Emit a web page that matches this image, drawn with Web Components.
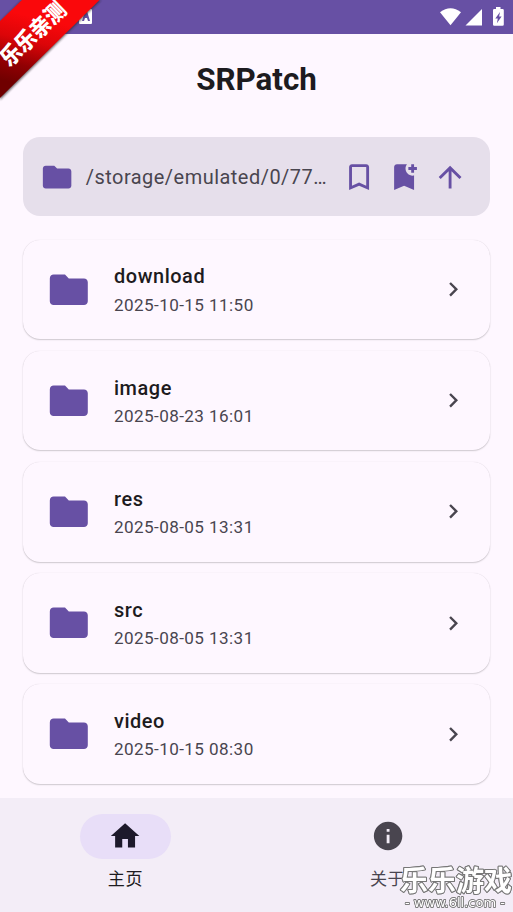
<!DOCTYPE html>
<html lang="zh-CN">
<head>
<meta charset="utf-8">
<title>SRPatch</title>
<style>
html, body { margin: 0; height: 100%; }
body { font-family: Roboto, "Noto Sans CJK SC", sans-serif; background: #fef7ff; overflow: hidden; }
</style>
</head>
<body>
<patch-app></patch-app>
<script>
const ICONS = {
  folder: 'M10 4H4c-1.1 0-1.99.9-1.99 2L2 18c0 1.1.9 2 2 2h16c1.1 0 2-.9 2-2V8c0-1.1-.9-2-2-2h-8l-2-2z',
  bookmark: 'M17 3H7c-1.1 0-2 .9-2 2v16l7-3 7 3V5c0-1.1-.9-2-2-2zm0 15-5-2.18L7 18V5h10v13z',
  bookmarkAdd: 'M21 7h-2v2h-2V7h-2V5h2V3h2v2h2v2zm-2 14-7-3-7 3V5c0-1.1.9-2 2-2h7c-.63.84-1 1.87-1 3 0 2.76 2.24 5 5 5 .34 0 .68-.03 1-.1V21z',
  up: 'M4 12l1.41 1.41L11 7.83V20h2V7.83l5.58 5.59L20 12l-8-8-8 8z',
  chevron: 'M10 6 8.59 7.41 13.17 12l-4.58 4.59L10 18l6-6z',
  home: 'M10 20v-6h4v6h5v-8h3L12 3 2 12h3v8z',
  info: 'M12 2C6.48 2 2 6.48 2 12s4.48 10 10 10 10-4.48 10-10S17.52 2 12 2zm1 15h-2v-6h2v6zm0-8h-2V7h2v2z'
};
function define(name, render) {
  customElements.define(name, class extends HTMLElement {
    constructor() { super(); this.attachShadow({ mode: 'open' }); }
    connectedCallback() { this.shadowRoot.innerHTML = render(this); }
  });
}

define('md-icon', el => `
<style>
:host { display: block; flex: none; width: var(--size, 34.2px); height: var(--size, 34.2px); }
svg { display: block; width: 100%; height: 100%; fill: currentColor; }
</style>
<svg viewBox="0 0 24 24"><path d="${ICONS[el.getAttribute('name')]}"/></svg>`);

define('status-bar', () => `
<style>
:host { display: flex; height: 34px; background: #6750a4; box-sizing: border-box; justify-content: space-between; padding: 0 8px 0 78px; }
svg { display: block; }
</style>
<svg width="16" height="34" viewBox="0 0 16 34"><rect x="1" y="9" width="13" height="15" rx="1" fill="#fff"/><path d="M4 21 7 11h2l3 10h-2l-1-3H7l-1 3z" fill="#6750a4"/></svg>
<svg width="66" height="34" viewBox="439 0 66 34" fill="#fff">
<path d="M440 12.2Q450.500 4.500 461 12.200L450.500 25.200z"/>
<path d="M482 9v16.500h-16.500z"/>
<path d="M496 9V7h4.500v2H502.500q1.300 0 1.300 1.300V24.500q0 1.300-1.300 1.300H494.300q-1.300 0-1.300-1.300V10.300Q493 9 494.300 9z"/>
<path d="M500 12l-4.700 6.500h2.500l-.9 4.800 4.700-6.800h-2.500z" fill="#6750a4"/>
</svg>`);

define('path-bar', () => `
<style>
:host { display: flex; align-items: center; height: 79.500px; box-sizing: border-box; padding: 0 23.200px 0 17px; background: #e6dfeb; border-radius: 17.100px; color: #6750a4; }
.path { flex: none; width: 243px; margin-left: 11.700px; font-size: 19.950px; line-height: 28px; letter-spacing: .5px; color: #49454f; white-space: nowrap; }
.actions { display: flex; margin-left: auto; gap: 11.400px; }
</style>
<md-icon name="folder"></md-icon>
<div class="path"><slot></slot></div>
<div class="actions"><md-icon name="bookmark"></md-icon><md-icon name="bookmarkAdd"></md-icon><md-icon name="up"></md-icon></div>`);

define('file-card', el => `
<style>
:host { display: flex; align-items: center; height: 99.750px; box-sizing: border-box; padding: 0 22.800px 0 22.800px; border-radius: 17.100px; background: #fef7ff; box-shadow: 0 1px 1.500px rgba(0,0,0,.18), 0 0 1px rgba(0,0,0,.14); }
.folder { --size: 45.600px; color: #6750a4; }
.text { flex: 1; margin-left: 22.800px; }
.name { font-size: 19.950px; font-weight: 500; line-height: 28.500px; letter-spacing: .55px; color: #1d1b20; }
.date { font-size: 17.100px; line-height: 22.800px; margin-top: 2.850px; letter-spacing: .41px; color: #49454f; }
.go { --size: 28.500px; color: #49454f; }
</style>
<md-icon class="folder" name="folder"></md-icon>
<div class="text"><div class="name"><slot></slot></div><div class="date">${el.getAttribute('date')}</div></div>
<md-icon class="go" name="chevron"></md-icon>`);

define('nav-item', el => `
<style>
:host { display: flex; flex: 1; flex-direction: column; align-items: center; color: #49454f; }
.pill { display: flex; align-items: center; justify-content: center; width: 91.200px; height: 45.600px; border-radius: 22.800px; }
:host([active]) .pill { background: #e8def8; color: #1d192b; }
:host([active]) { color: #1d1b20; }
.label { margin-top: 8.600px; font-size: 17.100px; line-height: 22.800px; letter-spacing: .5px; }
</style>
<div class="pill"><md-icon name="${el.getAttribute('icon')}"></md-icon></div>
<div class="label"><slot></slot></div>`);

define('nav-bar', () => `
<style>:host { display: flex; gap: 11.400px; height: 114px; box-sizing: border-box; padding-top: 15.700px; background: #f3edf7; }</style>
<slot></slot>`);

define('corner-ribbon', () => `
<style>
:host { position: absolute; left: 0; top: 0; width: 110px; height: 110px; }
svg { display: block; }
text { font: 900 20px "Noto Sans CJK SC", sans-serif; fill: #fff; }
</style>
<svg width="110" height="110" viewBox="0 0 110 110">
<defs><linearGradient id="r" gradientUnits="userSpaceOnUse" x1="38" y1="18" x2="22" y2="85"><stop offset="0" stop-color="#fa080b"/><stop offset=".35" stop-color="#dc0508"/><stop offset=".72" stop-color="#910003"/><stop offset="1" stop-color="#700000"/></linearGradient>
<filter id="s"><feGaussianBlur stdDeviation="1.300"/></filter></defs>
<path d="M22 0H101L0 100V22z" fill="#222" opacity=".65" filter="url(#s)"/>
<path d="M22 0H99.500L0 98V21z" fill="url(#r)"/>
<text transform="translate(33.200 34) rotate(-44) scale(1 1.120)" x="0" y="7" text-anchor="middle" textLength="81" lengthAdjust="spacingAndGlyphs">乐乐亲测</text>
</svg>`);

define('site-mark', () => `
<style>
:host { position: absolute; left: 393px; top: 856px; width: 120px; height: 56px; }
svg { display: block; filter: drop-shadow(0 0 .6px #777); }
text { fill: #fff; stroke: #777; paint-order: stroke; stroke-linejoin: round; }
.name { font: 700 28px "Noto Sans CJK SC", sans-serif; stroke-width: 2px; }
.url { font: 13px "DejaVu Sans", sans-serif; stroke-width: 1.500px; }
</style>
<svg width="120" height="56" viewBox="0 0 120 56">
<text class="name" x="7" y="35" textLength="112" lengthAdjust="spacingAndGlyphs">乐乐游戏</text>
<text class="url" x="12" y="51" textLength="100" lengthAdjust="spacingAndGlyphs">- www.6ll.com -</text>
</svg>`);

define('patch-app', () => `
<style>
:host { position: relative; display: flex; flex-direction: column; width: 513px; height: 912px; overflow: hidden; background: #fef7ff; }
h1 { margin: 0; height: 91.200px; line-height: 91.200px; text-align: center; font-size: 31.350px; font-weight: 700; color: #1d1b20; }
main { flex: 1; display: flex; flex-direction: column; padding: 11.800px 22.800px 0; }
.files { display: flex; flex-direction: column; gap: 11.400px; margin-top: 23.100px; }
</style>
<status-bar></status-bar>
<h1>SRPatch</h1>
<main>
<path-bar>/storage/emulated/0/77…</path-bar>
<div class="files">
<file-card date="2025-10-15 11:50">download</file-card>
<file-card date="2025-08-23 16:01">image</file-card>
<file-card date="2025-08-05 13:31">res</file-card>
<file-card date="2025-08-05 13:31">src</file-card>
<file-card date="2025-10-15 08:30">video</file-card>
</div>
</main>
<nav-bar><nav-item icon="home" active>主页</nav-item><nav-item icon="info">关于</nav-item></nav-bar>
<corner-ribbon></corner-ribbon>
<site-mark></site-mark>`);
</script>
</body>
</html>
